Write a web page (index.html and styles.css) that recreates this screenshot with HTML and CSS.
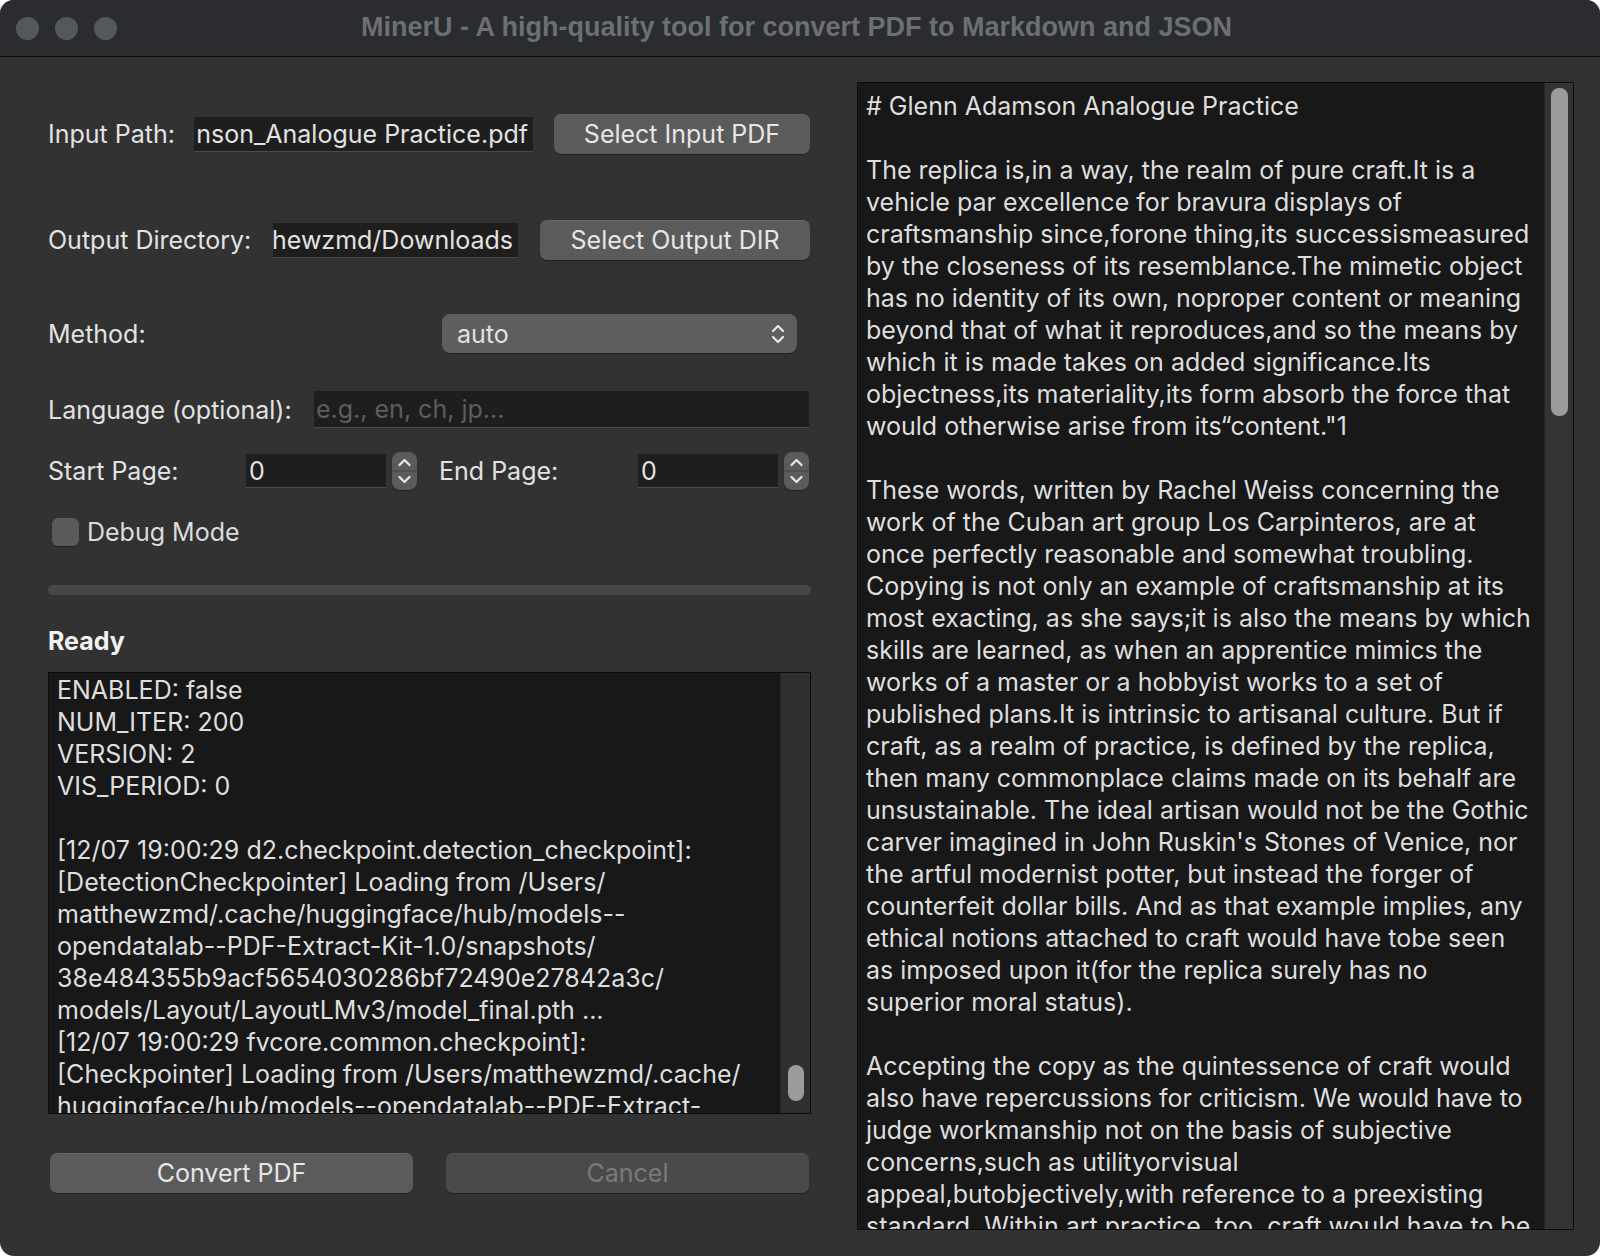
FILE: index.html
```html
<!DOCTYPE html>
<html>
<head>
<meta charset="utf-8">
<link rel="stylesheet" href="styles.css">
</head>
<body>
<div class="window">
  <div class="titlebar">
    <div class="lights"><span class="light"></span><span class="light"></span><span class="light"></span></div>
    <div class="title">MinerU - A high-quality tool for convert PDF to Markdown and JSON</div>
  </div>
  <div class="main">
    <div class="left">
      <div class="row row-input">
        <div class="label lbl-input">Input Path:</div>
        <div class="field field-input"><span class="field-text">nson_Analogue Practice.pdf</span></div>
        <div class="btn btn-input">Select Input PDF</div>
      </div>
      <div class="row row-output">
        <div class="label lbl-output">Output Directory:</div>
        <div class="field field-output"><span class="field-text">hewzmd/Downloads</span></div>
        <div class="btn btn-output">Select Output DIR</div>
      </div>
      <div class="row row-method">
        <div class="label lbl-method">Method:</div>
        <div class="combo">
          <span>auto</span>
          <svg class="combo-arrows" width="16" height="24" viewBox="0 0 16 24"><path d="M3 9 L8 4 L13 9" fill="none" stroke="#e8e8e8" stroke-width="2.2" stroke-linecap="round" stroke-linejoin="round"/><path d="M3 15 L8 20 L13 15" fill="none" stroke="#e8e8e8" stroke-width="2.2" stroke-linecap="round" stroke-linejoin="round"/></svg>
        </div>
      </div>
      <div class="row row-lang">
        <div class="label lbl-lang">Language (optional):</div>
        <div class="field field-lang"><span class="placeholder">e.g., en, ch, jp...</span></div>
      </div>
      <div class="row row-pages">
        <div class="label lbl-start">Start Page:</div>
        <div class="field field-num">0</div>
        <div class="spin">
          <svg width="25" height="38" viewBox="0 0 25 38"><path d="M7.5 13 L12.5 8 L17.5 13" fill="none" stroke="#e8e8e8" stroke-width="2.2" stroke-linecap="round" stroke-linejoin="round"/><line x1="0" y1="19" x2="25" y2="19" stroke="#444" stroke-width="1"/><path d="M7.5 25 L12.5 30 L17.5 25" fill="none" stroke="#e8e8e8" stroke-width="2.2" stroke-linecap="round" stroke-linejoin="round"/></svg>
        </div>
        <div class="label lbl-end">End Page:</div>
        <div class="field field-num">0</div>
        <div class="spin">
          <svg width="25" height="38" viewBox="0 0 25 38"><path d="M7.5 13 L12.5 8 L17.5 13" fill="none" stroke="#e8e8e8" stroke-width="2.2" stroke-linecap="round" stroke-linejoin="round"/><line x1="0" y1="19" x2="25" y2="19" stroke="#444" stroke-width="1"/><path d="M7.5 25 L12.5 30 L17.5 25" fill="none" stroke="#e8e8e8" stroke-width="2.2" stroke-linecap="round" stroke-linejoin="round"/></svg>
        </div>
      </div>
      <div class="row row-debug">
        <div class="checkbox"></div>
        <div class="label lbl-debug">Debug Mode</div>
      </div>
      <div class="progress"></div>
      <div class="status">Ready</div>
      <div class="log">
        <div class="log-text">ENABLED: false<br>NUM_ITER: 200<br>VERSION: 2<br>VIS_PERIOD: 0<br><br>[12/07 19:00:29 d2.checkpoint.detection_checkpoint]:<br>[DetectionCheckpointer] Loading from /Users/<br>matthewzmd/.cache/huggingface/hub/models--<br>opendatalab--PDF-Extract-Kit-1.0/snapshots/<br>38e484355b9acf5654030286bf72490e27842a3c/<br>models/Layout/LayoutLMv3/model_final.pth ...<br>[12/07 19:00:29 fvcore.common.checkpoint]:<br>[Checkpointer] Loading from /Users/matthewzmd/.cache/<br>huggingface/hub/models--opendatalab--PDF-Extract-</div>
        <div class="vscroll log-scroll"><div class="thumb log-thumb"></div></div>
      </div>
      <div class="row row-actions">
        <div class="btn btn-convert">Convert PDF</div>
        <div class="btn btn-cancel">Cancel</div>
      </div>
    </div>
    <div class="preview">
      <div class="preview-text"># Glenn Adamson Analogue Practice<br><br>The replica is,in a way, the realm of pure craft.It is a<br>vehicle par excellence for bravura displays of<br>craftsmanship since,forone thing,its successismeasured<br>by the closeness of its resemblance.The mimetic object<br>has no identity of its own, noproper content or meaning<br>beyond that of what it reproduces,and so the means by<br>which it is made takes on added significance.Its<br>objectness,its materiality,its form absorb the force that<br>would otherwise arise from its“content."1<br><br>These words, written by Rachel Weiss concerning the<br>work of the Cuban art group Los Carpinteros, are at<br>once perfectly reasonable and somewhat troubling.<br>Copying is not only an example of craftsmanship at its<br>most exacting, as she says;it is also the means by which<br>skills are learned, as when an apprentice mimics the<br>works of a master or a hobbyist works to a set of<br>published plans.It is intrinsic to artisanal culture. But if<br>craft, as a realm of practice, is defined by the replica,<br>then many commonplace claims made on its behalf are<br>unsustainable. The ideal artisan would not be the Gothic<br>carver imagined in John Ruskin's Stones of Venice, nor<br>the artful modernist potter, but instead the forger of<br>counterfeit dollar bills. And as that example implies, any<br>ethical notions attached to craft would have tobe seen<br>as imposed upon it(for the replica surely has no<br>superior moral status).<br><br>Accepting the copy as the quintessence of craft would<br>also have repercussions for criticism. We would have to<br>judge workmanship not on the basis of subjective<br>concerns,such as utilityorvisual<br>appeal,butobjectively,with reference to a preexisting<br>standard. Within art practice, too, craft would have to be</div>
      <div class="vscroll preview-scroll"><div class="thumb preview-thumb"></div></div>
    </div>
  </div>
</div>
</body>
</html>
```
FILE: styles.css
```css
* { box-sizing: border-box; }
html, body { margin: 0; padding: 0; }
body {
  background: #ffffff;
  width: 1600px;
  height: 1256px;
  overflow: hidden;
  font-family: "Inter", "Liberation Sans", Arial, sans-serif;
  font-size: 25px;
  color: #e2e2e2;
}
.window {
  width: 1600px;
  height: 1256px;
  background: #323232;
  border-radius: 14px;
  overflow: hidden;
  display: flex;
  flex-direction: column;
}
.titlebar {
  height: 57px;
  flex: none;
  background: #2a2c2f;
  border-bottom: 1px solid #0f0f10;
  display: flex;
  align-items: center;
}
.lights { display: flex; gap: 16px; padding-left: 16px; }
.light { width: 23px; height: 23px; border-radius: 50%; background: #54575c; }
.title {
  flex: 1;
  text-align: center;
  color: #6c6f73;
  font-family: "Liberation Sans", Arial, sans-serif;
  font-weight: bold;
  font-size: 27px;
  margin-left: -124px;
  padding-bottom: 2px;
}
.main { flex: 1; display: flex; }
.left {
  width: 811px;
  padding-left: 48px;
  display: flex;
  flex-direction: column;
}
.row { display: flex; align-items: center; }
.label { white-space: nowrap; flex: none; }
.field {
  height: 35px;
  background: #1e1e1e;
  border-bottom: 1px solid #4a4a4a;
  overflow: hidden;
  white-space: nowrap;
  display: flex;
  align-items: center;
  flex: none;
}
.btn {
  height: 40px;
  background: #5b5b5b;
  border-radius: 7px;
  display: flex;
  align-items: center;
  justify-content: center;
  color: #e6e6e6;
  box-shadow: 0 1px 1px rgba(0,0,0,0.35), inset 0 1px 0 rgba(255,255,255,0.06);
  flex: none;
}
.row-input { margin-top: 57px; height: 40px; }
.lbl-input { width: 146px; }
.field-input { width: 339px; justify-content: flex-end; padding-right: 5px; }
.btn-input { width: 256px; margin-left: 21px; }
.row-output { margin-top: 66px; height: 40px; }
.lbl-output { width: 225px; }
.field-output { width: 245px; justify-content: flex-end; padding-right: 5px; }
.btn-output { width: 270px; margin-left: 22px; }
.row-method { margin-top: 54px; height: 39px; }
.lbl-method { width: 394px; }
.combo {
  width: 355px;
  height: 39px;
  background: #5e5e5e;
  border-radius: 8px;
  display: flex;
  align-items: center;
  justify-content: space-between;
  padding: 0 11px 0 15px;
  box-shadow: 0 1px 1px rgba(0,0,0,0.35);
}
.row-lang { margin-top: 38px; height: 37px; }
.lbl-lang { width: 266px; }
.field-lang { width: 495px; height: 37px; padding-left: 2px; }
.placeholder { color: #5d5d5d; }
.row-pages { margin-top: 24px; height: 38px; }
.lbl-start { width: 198px; }
.lbl-end { width: 199px; margin-left: 22px; }
.field-num { width: 140px; height: 34px; padding-left: 3px; }
.spin {
  width: 25px;
  height: 38px;
  margin-left: 6px;
  background: #5b5b5b;
  border-radius: 8px;
  display: flex;
  box-shadow: 0 1px 1px rgba(0,0,0,0.35);
}
.row-debug { margin-top: 28px; height: 28px; }
.checkbox {
  width: 27px;
  height: 28px;
  margin-left: 4px;
  margin-right: 8px;
  border-radius: 6px;
  background: #5a5a5a;
  box-shadow: 0 1px 1px rgba(0,0,0,0.35);
}
.lbl-debug { color: #dcdcdc; }
.progress {
  margin-top: 39px;
  height: 10px;
  width: 763px;
  border-radius: 5px;
  background: #474747;
}
.status {
  margin-top: 31px;
  height: 30px;
  line-height: 30px;
  font-weight: bold;
  color: #f2f2f2;
}
.log {
  margin-top: 16px;
  width: 763px;
  height: 442px;
  background: #181818;
  border: 1px solid #0c0c0c;
  display: flex;
  overflow: hidden;
}
.log-text {
  flex: 1;
  padding: 1px 0 0 8px;
  line-height: 32px;
  white-space: nowrap;
  overflow: hidden;
  color: #dedede;
}
.vscroll {
  width: 30px;
  flex: none;
  background: #2f2f2f;
  border-left: 1px solid #262626;
  display: flex;
  flex-direction: column;
  align-items: center;
}
.thumb { width: 16px; border-radius: 8px; background: #9b9b9b; }
.log-thumb { height: 36px; margin-top: 392px; }
.row-actions { margin-top: 39px; height: 40px; gap: 33px; padding-left: 2px; }
.btn-convert { width: 363px; }
.btn-cancel { width: 363px; background: #4a4a4a; color: #7a7a7a; }
.preview {
  margin-left: 46px;
  margin-top: 25px;
  width: 717px;
  height: 1148px;
  background: #181818;
  border: 1px solid #0c0c0c;
  display: flex;
  overflow: hidden;
}
.preview-text {
  flex: 1;
  padding: 7px 0 0 8px;
  line-height: 32px;
  white-space: nowrap;
  overflow: hidden;
  color: #dedede;
}
.preview-scroll { width: 29px; background: #333333; }
.preview-thumb { height: 328px; margin-top: 5px; width: 17px; }
```
